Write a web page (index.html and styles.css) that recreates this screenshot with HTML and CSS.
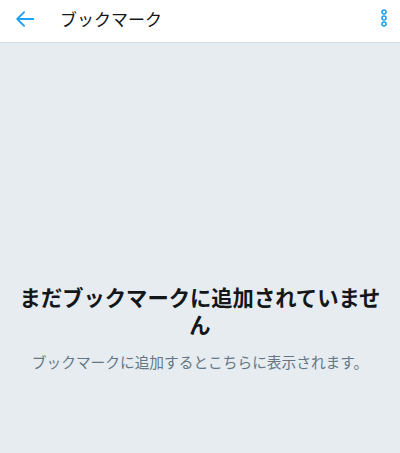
FILE: index.html
```html
<!DOCTYPE html>
<html>
<head>
	<meta charset="UTF-8">
	<meta name="viewport" content="width=device-width, initial-scale=1.0">
	<title>ブックマーク</title>
	<link rel="stylesheet" href="styles.css">
</head>
<body>
	<div class="header">
		<button class="back-btn" aria-label="戻る">
			<svg width="22" height="22" viewBox="0 0 24 24">
				<path d="M21 12H4M11 4.5L3.5 12L11 19.5" fill="none" stroke="#1da1f2" stroke-width="2" stroke-linecap="round" stroke-linejoin="round"/>
			</svg>
		</button>
		<h1 class="title">ブックマーク</h1>
		<button class="more-btn" aria-label="その他">
			<svg width="8" height="18" viewBox="0 0 8 18">
				<circle cx="4" cy="3" r="2" fill="none" stroke="#1da1f2" stroke-width="1.6"/>
				<circle cx="4" cy="9" r="2" fill="none" stroke="#1da1f2" stroke-width="1.6"/>
				<circle cx="4" cy="15" r="2" fill="none" stroke="#1da1f2" stroke-width="1.6"/>
			</svg>
		</button>
	</div>

	<div class="empty">
		<h2 class="empty-title">まだブックマークに追加されていません</h2>
		<p class="empty-text">ブックマークに追加するとこちらに表示されます。</p>
	</div>
</body>
</html>
```

FILE: styles.css
```css
body {
	margin: 0;
	background-color: #e6ecf0;
	font-family: "Noto Sans CJK JP", "Noto Sans", sans-serif;
	height: 453px;
	overflow: hidden;
}

.header {
	display: flex;
	align-items: center;
	height: 42px;
	background-color: white;
	border-bottom: 1px solid #d3dbe0;
}

.back-btn,
.more-btn {
	background: none;
	border: none;
	padding: 0;
	display: flex;
	align-items: center;
	justify-content: center;
}

.back-btn {
	width: 22px;
	margin-left: 14px;
	margin-top: -5px;
}

.title {
	flex: 1;
	margin: -6px 0 0 24px;
	font-size: 17px;
	font-weight: normal;
	color: #14171a;
}

.more-btn {
	width: 8px;
	margin-right: 12px;
	margin-top: -6px;
}

.empty {
	padding: 240px 18px 0;
	text-align: center;
}

.empty-title {
	margin: 0;
	font-size: 21.3px;
	line-height: 27px;
	font-weight: bold;
	color: #14171a;
}

.empty-text {
	margin: 15px 0 0;
	font-size: 14.7px;
	line-height: 20px;
	color: #657786;
}
```
